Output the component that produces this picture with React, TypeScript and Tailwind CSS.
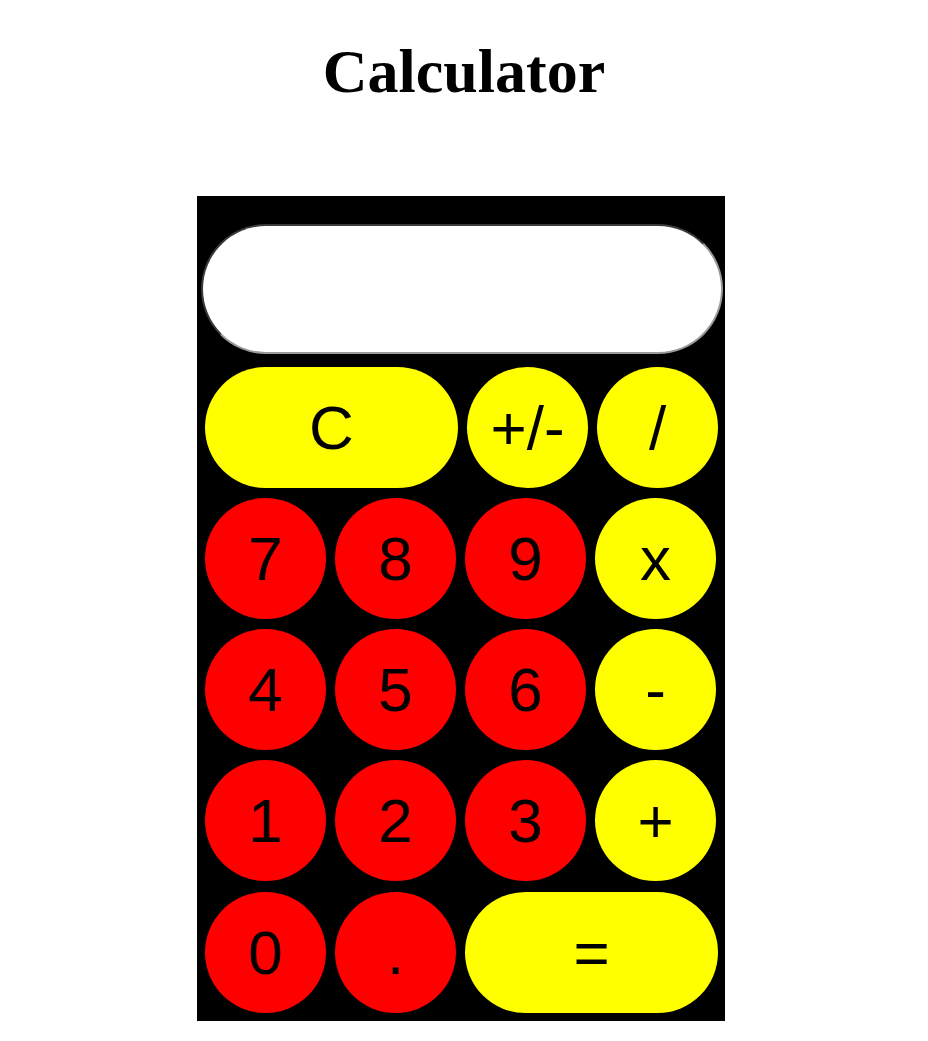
import React from "react";

type Btn = { label: string; color: "y" | "r"; wide?: boolean };

const rows: Btn[][] = [
  [
    { label: "C", color: "y", wide: true },
    { label: "+/-", color: "y" },
    { label: "/", color: "y" },
  ],
  [
    { label: "7", color: "r" },
    { label: "8", color: "r" },
    { label: "9", color: "r" },
    { label: "x", color: "y" },
  ],
  [
    { label: "4", color: "r" },
    { label: "5", color: "r" },
    { label: "6", color: "r" },
    { label: "-", color: "y" },
  ],
  [
    { label: "1", color: "r" },
    { label: "2", color: "r" },
    { label: "3", color: "r" },
    { label: "+", color: "y" },
  ],
  [
    { label: "0", color: "r" },
    { label: ".", color: "r" },
    { label: "=", color: "y", wide: true },
  ],
];

function Key({ b }: { b: Btn }) {
  return (
    <div
      className={
        "h-[121px] rounded-full flex items-center justify-center pt-[1px] text-[62px] leading-none text-black " +
        (b.wide ? "w-[253px] " : "w-[121px] ") +
        (b.color === "y" ? "bg-[#ffff00]" : "bg-[#ff0000]")
      }
      style={{ fontFamily: '"Liberation Sans", Arial, sans-serif' }}
    >
      {b.label}
    </div>
  );
}

export default function App() {
  return (
    <div className="bg-white min-h-[1041px] w-full">
      <h1
        className="pt-[40px] pb-[1px] text-center text-[62px] leading-[62px] font-bold text-black"
        style={{ fontFamily: '"Liberation Serif", "Times New Roman", serif' }}
      >
        Calculator
      </h1>
      <div className="pl-[197px] pt-[93px]">
        <div className="w-[528px] h-[825px] bg-black pt-[28px]">
          <div className="ml-[4px] w-[522px] h-[130px] rounded-full bg-white border-2 border-t-[#3a3a3a] border-l-[#3a3a3a] border-b-[#9a9a9a] border-r-[#9a9a9a]" />
          <div className="pl-[8px] pt-[13px] flex flex-col">
            {rows.map((r, i) => (
              <div
                key={i}
                className={
                  "flex gap-[9px] " + (i === 4 ? "mt-[11px]" : i === 0 ? "" : "mt-[10px]")
                }
              >
                {r.map((b) => (
                  <Key key={b.label} b={b} />
                ))}
              </div>
            ))}
          </div>
        </div>
      </div>
    </div>
  );
}
